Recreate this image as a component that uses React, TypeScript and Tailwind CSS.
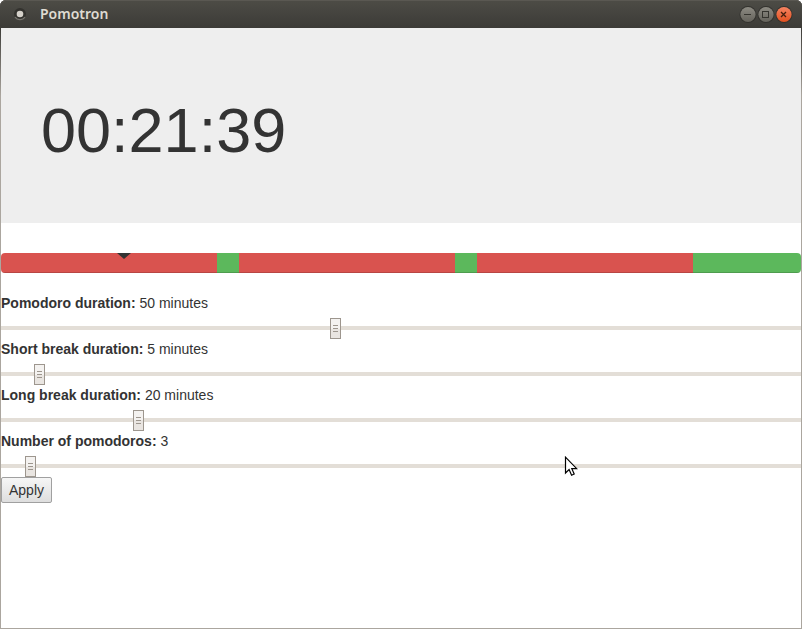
import { useState } from "react";

type Segment = { kind: "work" | "break"; minutes: number };

const segments: Segment[] = [
  { kind: "work", minutes: 50 },
  { kind: "break", minutes: 5 },
  { kind: "work", minutes: 50 },
  { kind: "break", minutes: 5 },
  { kind: "work", minutes: 50 },
  { kind: "break", minutes: 25 },
];

const total = segments.reduce((sum, s) => sum + s.minutes, 0);
const elapsed = 28.35;

function TitleBar() {
  return (
    <header className="flex h-7 items-center rounded-t-md bg-linear-to-b from-[#4d4c46] to-[#3c3b37] pr-[9px] pl-3 shadow-[inset_0_1px_0_#5a5852]">
      <svg className="size-4" viewBox="0 0 16 16" aria-hidden="true">
        <circle cx="8" cy="8" r="6" fill="#33322e" />
        <path d="M3 11a6 6 0 0 0 10 0" fill="none" stroke="#77756f" strokeWidth="1.3" />
        <circle cx="8" cy="8" r="3.3" fill="#d5d1ca" />
      </svg>
      <h1 className="ml-3 flex-1 font-['Noto_Sans',sans-serif] text-[14px] leading-5 font-semibold text-[#dfdbd2]">
        Pomotron
      </h1>
      <div className="flex">
        <button type="button" aria-label="Minimize" className="size-[18px]">
          <svg viewBox="0 0 18 18" aria-hidden="true">
            <circle cx="9" cy="9.5" r="8.5" fill="#33322e" />
            <circle cx="9" cy="9.5" r="7.6" fill="url(#gray)" />
            <path d="M5 9.5h7" stroke="#35342f" />
          </svg>
        </button>
        <button type="button" aria-label="Maximize" className="size-[18px]">
          <svg viewBox="0 0 18 18" aria-hidden="true">
            <circle cx="9" cy="9.5" r="8.5" fill="#33322e" />
            <circle cx="9" cy="9.5" r="7.6" fill="url(#gray)" />
            <rect x="5.5" y="6.5" width="6" height="6" fill="none" stroke="#35342f" />
          </svg>
        </button>
        <button type="button" aria-label="Close" className="size-[18px]">
          <svg viewBox="0 0 18 18" aria-hidden="true">
            <defs>
              <linearGradient id="gray" x1="0" y1="0" x2="0" y2="1">
                <stop offset="0" stopColor="#8d8b83" />
                <stop offset="1" stopColor="#64625b" />
              </linearGradient>
              <linearGradient id="orange" x1="0" y1="0" x2="0" y2="1">
                <stop offset="0" stopColor="#f58462" />
                <stop offset="1" stopColor="#e2501f" />
              </linearGradient>
            </defs>
            <circle cx="9" cy="9.5" r="8.5" fill="#33322e" />
            <circle cx="9" cy="9.5" r="7.6" fill="url(#orange)" />
            <path d="M6 7l5 5M11 7l-5 5" stroke="#45200f" strokeWidth="1.3" />
          </svg>
        </button>
      </div>
    </header>
  );
}

function Timeline() {
  return (
    <div className="relative mt-[30px] mb-5">
      <div className="flex h-5 overflow-hidden rounded">
        {segments.map((s, i) => (
          <div
            key={i}
            className={
              s.kind === "work"
                ? "basis-0 bg-[#d9534f] shadow-[inset_0_-1px_0_rgba(0,0,0,0.15)]"
                : "basis-0 bg-[#5cb85c] shadow-[inset_0_-1px_0_rgba(0,0,0,0.15)]"
            }
            style={{ flexGrow: s.minutes }}
          />
        ))}
      </div>
      <div
        className="absolute top-0 -ml-[7px] border-x-7 border-t-6 border-x-transparent border-t-[#333]"
        style={{ left: `${(elapsed / total) * 100}%` }}
      />
    </div>
  );
}

type SliderProps = { id: string; label: string; initial: number; max: number; unit?: string };

function Slider({ id, label, initial, max, unit = "" }: SliderProps) {
  const [value, setValue] = useState(initial);
  return (
    <div>
      <label htmlFor={id} className="block">
        <strong>{label}:</strong> {value}
        {unit}
      </label>
      <input
        id={id}
        type="range"
        min={0}
        max={max}
        value={value}
        onChange={(e) => setValue(Number(e.target.value))}
        className="mt-[5px] block h-[21px] w-full appearance-none bg-[linear-gradient(#e3ded7,#e3ded7)] bg-[length:100%_4px] bg-[position:0_8px] bg-no-repeat [&::-webkit-slider-thumb]:h-[21px] [&::-webkit-slider-thumb]:w-[11px] [&::-webkit-slider-thumb]:appearance-none [&::-webkit-slider-thumb]:border [&::-webkit-slider-thumb]:border-[#9d968e] [&::-webkit-slider-thumb]:bg-[linear-gradient(#9d968e,#9d968e),linear-gradient(#9d968e,#9d968e),linear-gradient(#9d968e,#9d968e),linear-gradient(#f4f2f0_50%,#e9e5e1_50%)] [&::-webkit-slider-thumb]:bg-[size:5px_1px,5px_1px,5px_1px,100%_100%] [&::-webkit-slider-thumb]:bg-[position:2px_6px,2px_9px,2px_12px,0_0] [&::-webkit-slider-thumb]:bg-no-repeat"
      />
    </div>
  );
}

function Pointer() {
  return (
    <svg
      className="pointer-events-none absolute top-[456px] left-[564px] h-5 w-[14px]"
      viewBox="0 0 14 20"
      aria-hidden="true"
    >
      <path
        d="M1.5 1.2v15.8l3.6-3.4 2.5 5.6 2.6-1.2-2.4-5.3h4.9z"
        fill="#fff"
        stroke="#000"
        strokeWidth="1.2"
      />
    </svg>
  );
}

export default function App() {
  return (
    <div className="relative flex min-h-screen flex-col rounded-t-md bg-[linear-gradient(#3c3b37_28px,#aba69f_96px)] font-['Liberation_Sans',Arial,sans-serif] text-[14px] leading-5 text-[#333]">
      <TitleBar />
      <main className="mx-px mb-px flex-1 bg-white">
        <section className="bg-[#eee] px-10 pt-[68px] pb-[58px]">
          <time className="block text-[63px] leading-[69px]">00:21:39</time>
        </section>
        <Timeline />
        <form onSubmit={(e) => e.preventDefault()}>
          <Slider id="pomodoro" label="Pomodoro duration" initial={50} max={120} unit=" minutes" />
          <Slider id="short" label="Short break duration" initial={5} max={120} unit=" minutes" />
          <Slider id="long" label="Long break duration" initial={20} max={120} unit=" minutes" />
          <Slider id="count" label="Number of pomodoros" initial={3} max={100} />
          <button
            type="submit"
            className="block h-[26px] rounded-xs border border-[#a0a0a0] bg-linear-to-b from-[#f6f6f6] to-[#dedede] px-[7px]"
          >
            Apply
          </button>
        </form>
      </main>
      <Pointer />
    </div>
  );
}
